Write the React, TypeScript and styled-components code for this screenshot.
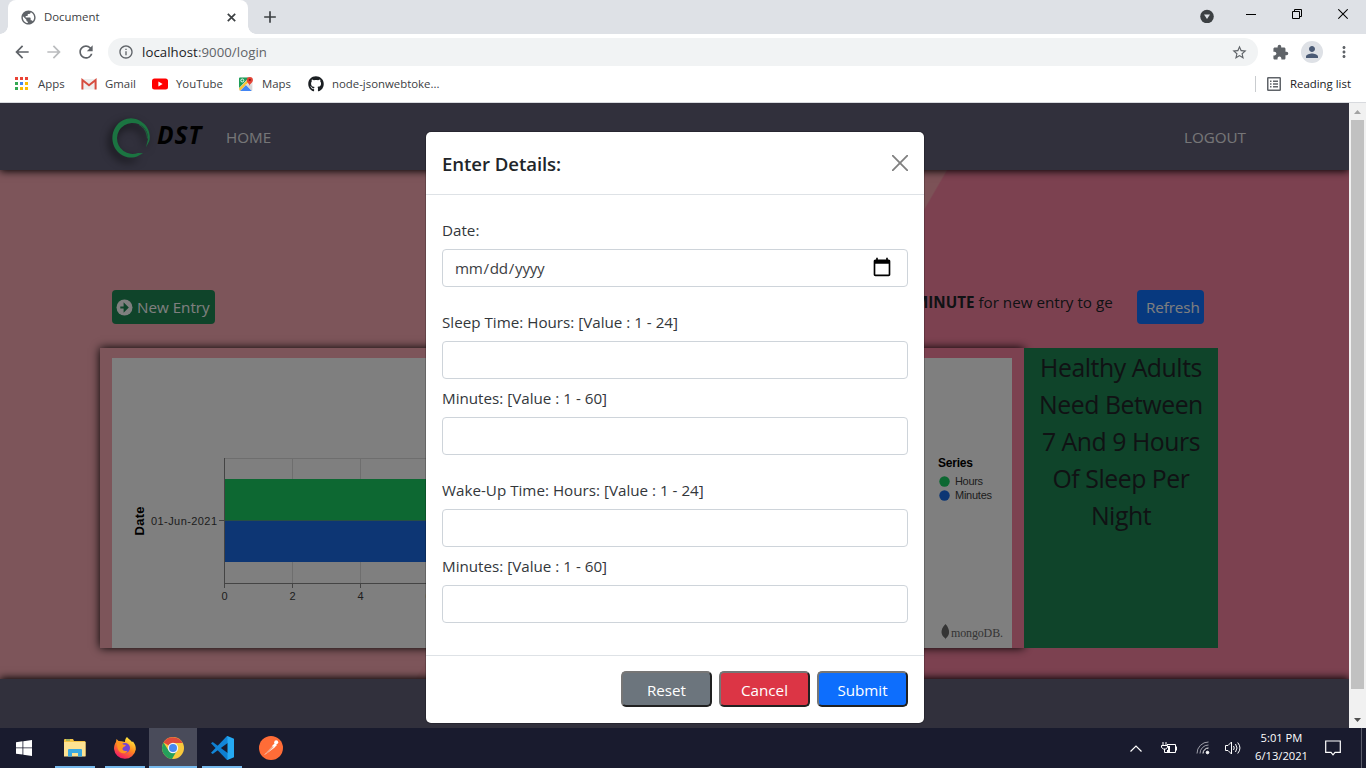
import React from "react";
import styled, { createGlobalStyle } from "styled-components";
import {
  MdArrowBack, MdArrowForward, MdRefresh, MdInfoOutline, MdStarOutline, MdExtension,
  MdPerson, MdMoreVert, MdPublic, MdAdd,
} from "react-icons/md";
import { FaGithub } from "react-icons/fa";

const Global = createGlobalStyle`
  * { box-sizing: border-box; }
  body { margin: 0; overflow: hidden; font-family: "Open Sans", "Noto Sans", sans-serif; }
  button, input { font-family: inherit; }
  svg { display: block; flex: none; }
`;

const Screen = styled.div`
  width: 1366px; height: 768px; display: flex; flex-direction: column; overflow: hidden;
`;
const Label = styled.span<{ $size?: number; $ls?: number; $color?: string; $weight?: number }>`
  font-size: ${p => p.$size ?? 12}px;
  letter-spacing: ${p => p.$ls ?? 0}px;
  color: ${p => p.$color ?? "#3c4043"};
  font-weight: ${p => p.$weight ?? 400};
  white-space: nowrap;
`;

/* ---- browser frame ---- */
const TabStrip = styled.div`
  height: 34px; flex: none; background: #dee1e6; display: flex; padding-left: 8px;
`;
const Tab = styled.div`
  position: relative; width: 240px; height: 34px; background: #fff; border-radius: 8px 8px 0 0;
  display: flex; align-items: center; padding: 0 12px 0 12px; color: #5f6368;
  &::before, &::after {
    content: ""; position: absolute; bottom: 0; width: 8px; height: 8px;
  }
  &::before { left: -8px; background: radial-gradient(circle at 0 0, transparent 7.5px, #fff 8px); }
  &::after { right: -8px; background: radial-gradient(circle at 100% 0, transparent 7.5px, #fff 8px); }
`;
const TabTitle = styled(Label)`flex: 1; margin-left: 7px; padding-bottom: 2px;`;
const NewTab = styled.div`
  width: 20px; margin-left: 12px; display: flex; align-items: center; color: #3c4043;
`;
const WindowControls = styled.div`
  margin-left: auto; display: flex; padding-top: 9px; padding-right: 18px;
`;
const ControlSlot = styled.div<{ $gap: number }>`margin-right: ${p => p.$gap}px;`;
const Toolbar = styled.div`
  height: 36px; flex: none; background: #fff; display: flex; align-items: center;
  padding-left: 12px; color: #5f6368;
`;
const NavIcon = styled.div<{ $dim?: boolean }>`
  width: 32px; color: ${p => (p.$dim ? "#babcbe" : "#5f6368")};
`;
const Omnibox = styled.div`
  width: 1150px; height: 28px; border-radius: 14px; background: #f1f3f4;
  display: flex; align-items: center; padding: 0 10px;
`;
const Url = styled(Label)`flex: 1; margin-left: 8px; color: #5f6368; b { font-weight: 400; color: #202124; }`;
const ToolIcons = styled.div`display: flex; align-items: center; margin-left: 14px;`;
const Avatar = styled.div`
  width: 22px; height: 22px; border-radius: 50%; background: #dee1e6; color: #4a5a75;
  display: flex; align-items: center; justify-content: center; margin: 0 12px;
`;
const Bookmarks = styled.div`
  height: 33px; flex: none; background: #fff; border-bottom: 1px solid #d8dade; display: flex;
  padding: 0 15px 4px 14px; align-items: center;
  ${Label} { padding-bottom: 2px; }
`;
const Bookmark = styled.div<{ $w: number }>`
  width: ${p => p.$w}px; display: flex; align-items: center; gap: 8px;
`;
const ReadingList = styled.div`
  margin-left: auto; height: 16px; border-left: 1px solid #c9cccf; padding-left: 10px;
  display: flex; align-items: center; gap: 8px;
`;

/* ---- web page ---- */
const Viewport = styled.div`height: 625px; flex: none; display: flex;`;
const Page = styled.main`
  position: relative; width: 1349px; height: 625px; display: flex; flex-direction: column; overflow: hidden;
  background:
    linear-gradient(120deg, #faaab4 43.7%, #f8a4ae 43.8%, #f8a4ae 57.6%, #f983a1 57.7%);
`;
const Navbar = styled.nav`
  height: 67px; flex: none; background: #626078; box-shadow: 0 1px 8px #000;
  display: flex; align-items: center; padding: 0 103px 0 110px;
`;
const Brand = styled.div`
  display: flex; align-items: center; color: #000; font: italic 700 24.5px "Open Sans", sans-serif;
`;
const LogoMark = styled.svg`filter: drop-shadow(-3px 4px 4px rgba(0,0,0,.7)); margin-top: 3px;`;
const BrandName = styled.span`width: 69px; margin: -4px 0 0 3px; letter-spacing: .8px;`;
const NavLink = styled(Label)<{ $push?: boolean }>`
  margin-left: ${p => (p.$push ? "auto" : "0")};
`;
const Actions = styled.div`
  height: 34px; margin: 120px 145px 0 112px; display: flex; flex: none;
`;
const PageButton = styled.button<{ $bg: string; $w: number; $indent?: number }>`
  width: ${p => p.$w}px; height: 34px; border: 0; border-radius: 4px; background: ${p => p.$bg};
  display: flex; align-items: center; gap: 4px; padding: 0 0 0 ${p => p.$indent ?? 4}px;
`;
const Ticker = styled.div`
  width: 206px; height: 26px; overflow: hidden; margin: 0 24px 0 auto; padding-left: 7px; font-size: 15.2px;
  line-height: 25px; color: #212529; white-space: nowrap;
  b { font-weight: 700; }
`;
const Dashboard = styled.section`display: flex; margin: 24px 0 0 100px; height: 300px; flex: none;`;
const ChartCard = styled.div`
  width: 924px; padding: 10px 12px 0; box-shadow: 0 0 9px #000;
  background: linear-gradient(120deg, #faaab4 50%, #f983a1 50%);
`;
const ChartPane = styled.div`
  height: 290px; background: #fff;
  svg { font-family: "Liberation Sans", Arial, sans-serif; }
`;
const Fact = styled.div`
  position: relative; width: 194px; background: #1e8854; color: #212529; text-align: center; font-size: 24.8px;
  line-height: 37px; padding: 1px 10px 0; letter-spacing: -0.45px;
`;
const Footer = styled.footer`
  margin-top: auto; height: 49px; background: #626078; box-shadow: 0 -1px 8px #000;
`;
const Backdrop = styled.div`position: absolute; inset: 0; background: rgba(0,0,0,.5);`;

const Scrollbar = styled.div`
  width: 17px; background: #f1f1f1; display: flex; flex-direction: column; align-items: center;
`;
const Thumb = styled.div`width: 13px; height: 569px; background: #c1c1c1;`;
const ScrollArrow = styled.div<{ $down?: boolean }>`
  height: 17px; display: flex; align-items: center; margin-top: ${p => (p.$down ? "auto" : "0")};
`;

/* ---- modal ---- */
const Modal = styled.div`
  position: absolute; left: 426px; top: 29px; width: 498px; height: 591px; background: #fff;
  border-radius: 5px; box-shadow: 0 0 0 1px rgba(0,0,0,.2); display: flex; flex-direction: column;
`;
const ModalHeader = styled.header`
  height: 63px; border-bottom: 1px solid #dee2e6; display: flex; align-items: center;
  justify-content: space-between; padding: 0 16px;
`;
const ModalBody = styled.form`flex: 1; padding: 24px 16px 0;`;
const Field = styled.label<{ $gap: number }>`
  display: flex; flex-direction: column; margin-bottom: ${p => p.$gap}px;
`;
const Caption = styled.span`
  font-size: 15.2px; color: #33373b; line-height: 22px; margin-bottom: 8px;
`;
const Input = styled.input`
  height: 38px; width: 100%; border: 1px solid #ced4da; border-radius: 4px; padding: 6px 12px 6px 11px;
  font-size: 15.2px; letter-spacing: -0.3px; color: #3c4043; background: #fff; outline: 0;
  &::-webkit-calendar-picker-indicator { width: 20px; height: 20px; padding: 0; margin: 0 3px 2px 0; background-size: 20px 20px; }
`;
const ModalFooter = styled.footer`
  height: 68px; border-top: 1px solid #dee2e6; display: flex; justify-content: flex-end; gap: 7px;
  padding: 15px 16px 0 0;
`;
const FormButton = styled.button<{ $bg: string }>`
  width: 91px; height: 36px; border-radius: 5px; border: 2px solid;
  border-color: #767676 #212121 #212121 #767676;
  background: ${p => p.$bg}; color: #fff; font-size: 15.2px; padding: 1px 0 0;
`;

/* ---- taskbar ---- */
const Taskbar = styled.div`
  height: 40px; flex: none; background: #191b2e; display: flex;
`;
const Task = styled.div<{ $w?: number; $active?: boolean; $open?: boolean }>`
  width: ${p => p.$w ?? 49}px; height: 40px; display: flex; align-items: center; justify-content: center;
  background: linear-gradient(${p => (p.$open ? "#76b9ed" : "transparent")}, ${p => (p.$open ? "#76b9ed" : "transparent")})
    center bottom / ${p => (p.$active ? "48px" : "40px")} 2px no-repeat, ${p => (p.$active ? "#494b5a" : "transparent")};
`;
const Tray = styled.div`margin-left: auto; display: flex; align-items: center; padding-right: 4px;`;
const TraySlot = styled.div<{ $w: number }>`
  width: ${p => p.$w}px; display: flex; justify-content: center;
`;
const Clock = styled.div`
  width: 69px; display: flex; flex-direction: column; align-items: center; line-height: 18px; padding-bottom: 2px;
`;
const PeekEdge = styled.div`width: 1px; height: 40px; background: #5b5d6b; margin-left: 11px;`;

const AppsGrid = () => {
  const colors = ["#ea4335", "#ea4335", "#ea4335", "#34a853", "#4285f4", "#fbbc04", "#34a853", "#fbbc04", "#fbbc04"];
  return (
    <svg width="16" height="16" shapeRendering="crispEdges">
      {colors.map((c, i) => (
        <rect key={i} x={1 + (i % 3) * 5} y={1 + Math.floor(i / 3) * 5} width="3" height="3" fill={c} />
      ))}
    </svg>
  );
};
const GmailIcon = () => (
  <svg width="16" height="16" viewBox="0 0 16 16">
    <rect x="1" y="3" width="14" height="10.5" fill="#eee" />
    <path d="M1.4 13.5V4l6.6 5.2L14.6 4v9.5" fill="none" stroke="#d64c3f" strokeWidth="2" />
  </svg>
);
const YouTubeIcon = () => (
  <svg width="16" height="16" viewBox="0 0 16 16">
    <rect y="2.5" width="16" height="11" rx="2.5" fill="#f00" />
    <path d="M6.4 5.6v4.8L10.6 8z" fill="#fff" />
  </svg>
);
const MapsIcon = () => (
  <svg width="16" height="16" viewBox="0 0 16 16">
    <rect x="1" y="1.5" width="13.5" height="13.5" rx="1.5" fill="#e4e4e4" />
    <path d="M1 2.5a1 1 0 0 1 1-1h9L1 12z" fill="#1e9e5a" />
    <path d="M2 15l6-6 6 6z" fill="#4285f4" />
    <path d="M1 12.5L12 1.5l1.5 1.5L2 14.7z" fill="#fbc32d" />
    <path d="M7 8l7 7V9.5z" fill="#d7d7d7" />
    <path d="M11.6 10c-.3-2.6-2.9-3.3-2.9-6A3 3 0 0 1 14.900 4c0 2.700-2.900 3.400-3.300 6z" fill="#e54335" />
    <circle cx="11.8" cy="3.9" r="1.1" fill="#8c1f18" />
    <circle cx="4.3" cy="4.5" r="1.5" fill="none" stroke="#fff" strokeWidth=".9" />
  </svg>
);
const ReadingIcon = () => (
  <svg width="16" height="16" viewBox="0 0 16 16" fill="none" stroke="#5f6368" strokeWidth="1.5">
    <rect x="1.75" y="1.75" width="12.5" height="12.5" rx=".6" />
    <path d="M4 5.200h1.500M7 5.200h5M4 8h1.500M7 8h5M4 10.800h1.500M7 10.800h5" />
  </svg>
);
const Arrow = ({ down, color }: { down?: boolean; color: string }) => (
  <svg width="7" height="4" viewBox="0 0 7 4"><path d={down ? "M0 0h7L3.500 4z" : "M0 4h7L3.500 0z"} fill={color} /></svg>
);
const BrushRing = () => (
  <LogoMark width="44" height="44" viewBox="0 0 44 44">
    <path d="M33 7A18.600 19.600 0 1 0 27 40.500l6-3.200-5-.4A15.500 15.500 0 1 1 29 8.300c6 2.500 9 8 9.200 14l-2.200 9 3.200-6c1.600-7-.6-14-6.200-18.300z" fill="#36e882" />
    <path d="M31 7.500c6 4 9 10.500 7.500 18M29 8.500c5 3 8 7 8.500 14" fill="none" stroke="#36e882" strokeWidth=".8" />
  </LogoMark>
);

const Chart = () => (
  <svg width="900" height="290">
    <g stroke="#ddd">
      <path d="M112.500 100.500H800M180.500 100.500V225M248.500 100.500V225M316.500 100.500V225" fill="none" />
    </g>
    <rect x="112" y="121" width="400" height="41" fill="#1ad064" />
    <rect x="112" y="163" width="400" height="41" fill="#1a6de8" />
    <rect x="112" y="162" width="400" height="1" fill="#4f9c8c" />
    <path d="M112.500 100V225.500H800M107 162.500h5M112.500 225v5M180.500 225v5M248.500 225v5M316.500 225v5" fill="none" stroke="#888" />
    <g fontSize="11" fill="#3c3c3c">
      <text x="39" y="167" textLength="66">01-Jun-2021</text>
      <text x="112.500" y="242" textAnchor="middle">0</text>
      <text x="180.500" y="242" textAnchor="middle">2</text>
      <text x="248.500" y="242" textAnchor="middle">4</text>
      <text x="316.500" y="242" textAnchor="middle">6</text>
      <text x="843" y="127" textLength="28">Hours</text>
      <text x="843" y="141" textLength="37">Minutes</text>
    </g>
    <text transform="translate(32 177.500) rotate(-90)" fontSize="13" fontWeight="700" textLength="29">Date</text>
    <text x="826" y="109" fontSize="12" fontWeight="700" textLength="35">Series</text>
    <circle cx="832.500" cy="123.500" r="5.200" fill="#1ad064" />
    <circle cx="832.500" cy="137.500" r="5.200" fill="#1a6de8" />
    <path d="M833.500 266c-6 6-4.500 11.500-.3 14.200l.3 1.300.4-1.300c4.200-3 4.600-8.500-.4-14.200z" fill="#6a6a6a" />
    <text x="839" y="279" fontSize="12" fill="#6a6a6a" textLength="52" style={{ fontFamily: "Liberation Serif" }}>mongoDB.</text>
  </svg>
);

const WindowsIcon = () => (
  <svg width="16" height="16" viewBox="0 0 16 16" fill="#fff">
    <path d="M0 2.200l6.500-.9v6.200H0zM7.300 1.200L16 0v7.500H7.300zM0 8.300h6.500v6.300L0 13.700zM7.300 8.300H16V16l-8.700-1.200z" />
  </svg>
);
const ExplorerIcon = () => (
  <svg width="22" height="20" viewBox="0 0 22 20">
    <path d="M0 2a1 1 0 0 1 1-1h8l1 2h10.500a1 1 0 0 1 1 1v14H0z" fill="#f5c445" />
    <path d="M0 4h21.500v14.500H0z" fill="#fde292" />
    <path d="M4 18.500V12a1 1 0 0 1 1-1h12a1 1 0 0 1 1 1v6.500h-4V15H8v3.500z" fill="#3ba9e0" />
    <path d="M2 2h4" stroke="#4d9e72" />
  </svg>
);
const FirefoxIcon = () => (
  <svg width="24" height="24" viewBox="0 0 24 24">
    <defs>
      <linearGradient id="fx" x1=".8" y1=".1" x2=".3" y2="1">
        <stop offset="0" stopColor="#ffe83e" /><stop offset=".45" stopColor="#ff8a1e" /><stop offset="1" stopColor="#f2136a" />
      </linearGradient>
    </defs>
    <path d="M14 1c1 2 4 3 5 5l1-.5c2 2.500 3 5 2.800 8A11 11 0 0 1 1 13c0-3 .6-5 2-7l.5-3 2 2 3 .2L12 6c0-2 .5-4 2-5z" fill="url(#fx)" />
    <circle cx="12" cy="12" r="5" fill="#7542d5" />
    <path d="M4 7c3-1.500 5 0 6 1.500l3 .5c-1 2-3 1.800-3.500 3.500s2 3.300 5 2.200c-2 4-8 3-9.500-1.200C4.300 11 4 9 4 7z" fill="#ff9420" />
  </svg>
);
const ChromeIcon = () => (
  <svg width="24" height="24" viewBox="0 0 24 24">
    <circle cx="12" cy="12" r="11" fill="#f9c93c" />
    <path d="M12 12L2.500 6.500A11 11 0 0 1 21.600 7H12z" fill="#de4a3b" />
    <path d="M2.500 6.500A11 11 0 0 0 11 23l5-8.500L12 12 7.500 14.500z" fill="#25a05b" />
    <circle cx="12" cy="12" r="5.200" fill="#f4f4f4" /><circle cx="12" cy="12" r="4" fill="#4688f1" />
  </svg>
);
const CodeIcon = () => (
  <svg width="24" height="24" viewBox="0 0 24 24">
    <path d="M1 7.300l1.700-1.200L18 17.300V24h-1z" fill="#0e7fd0" />
    <path d="M1 16.700l1.700 1.200L18 6.700V0h-1z" fill="#1386d8" />
    <path d="M17.500 0L24 2.800v18.400L17.500 24z" fill="#25a9f2" />
  </svg>
);
const PostmanIcon = () => (
  <svg width="24" height="24" viewBox="0 0 24 24">
    <circle cx="12" cy="12" r="12" fill="#ff6c37" />
    <path d="M5 19l8.500-9 2 1.800L7 18z" fill="#ffe3d6" />
    <path d="M13 10l3-3 2 2-3 3z" fill="#fff" /><circle cx="17.200" cy="6.200" r="2" fill="#fff" />
    <path d="M7 17.500l7-7" stroke="#e05c2b" strokeWidth=".8" />
  </svg>
);

export default function App() {
  return (
    <Screen>
      <Global />
      <TabStrip>
        <Tab>
          <MdPublic size={17} />
          <TabTitle $size={11.4}>Document</TabTitle>
          <svg width="9" height="9"><path d="M.8.8l7.400 7.400M8.200.8L.8 8.200" stroke="#3c4043" strokeWidth="1.700" /></svg>
        </Tab>
        <NewTab><MdAdd size={20} /></NewTab>
        <WindowControls>
          <ControlSlot $gap={32}>
            <svg width="14" height="14"><circle cx="7" cy="7.5" r="6.8" fill="#3c4043" /><path d="M4 5.500h6L7 10z" fill="#dee1e6" /></svg>
          </ControlSlot>
          <ControlSlot $gap={36}><svg width="10" height="12"><path d="M0 5.500h10" stroke="#000" /></svg></ControlSlot>
          <ControlSlot $gap={36}>
            <svg width="10" height="11" fill="none" stroke="#000"><path d="M.5 2.500h7v7h-7zM2.500 2.500v-2h7v7h-2" /></svg>
          </ControlSlot>
          <svg width="10" height="11"><path d="M.3.300l9.400 9.400M9.700.300L.3 9.700" stroke="#000" strokeWidth="1.100" /></svg>
        </WindowControls>
      </TabStrip>
      <Toolbar>
        <NavIcon><MdArrowBack size={20} /></NavIcon>
        <NavIcon $dim><MdArrowForward size={20} /></NavIcon>
        <NavIcon><MdRefresh size={20} /></NavIcon>
        <Omnibox>
          <MdInfoOutline size={16} />
          <Url $size={13.2} $ls={0.07}><b>localhost</b>:9000/login</Url>
          <MdStarOutline size={17} />
        </Omnibox>
        <ToolIcons>
          <MdExtension size={17} />
          <Avatar><MdPerson size={18} /></Avatar>
          <MdMoreVert size={18} />
        </ToolIcons>
      </Toolbar>
      <Bookmarks>
        <Bookmark $w={67}><AppsGrid /><Label $size={11.4}>Apps</Label></Bookmark>
        <Bookmark $w={71}><GmailIcon /><Label $size={11.4}>Gmail</Label></Bookmark>
        <Bookmark $w={86}><YouTubeIcon /><Label $size={11.4}>YouTube</Label></Bookmark>
        <Bookmark $w={70}><MapsIcon /><Label $size={11.4}>Maps</Label></Bookmark>
        <Bookmark $w={134}><FaGithub size={16} color="#1b1f23" /><Label $size={11.4}>node-jsonwebtoke...</Label></Bookmark>
        <ReadingList><ReadingIcon /><Label $size={11.4} $color="#202124">Reading list</Label></ReadingList>
      </Bookmarks>

      <Viewport>
        <Page>
          <Navbar>
            <Brand><BrushRing /><BrandName>DST</BrandName></Brand>
            <NavLink $size={15.2} $color="#ededf0">HOME</NavLink>
            <NavLink $size={15.2} $color="#ededf0" $push>LOGOUT</NavLink>
          </Navbar>
          <Actions>
            <PageButton $bg="#1e8854" $w={103}>
              <svg width="17" height="17" viewBox="0 0 17 17">
                <circle cx="8.5" cy="8.5" r="8" fill="#fff" />
                <path d="M4.300 8.500h5M8.600 5.700l2.800 2.800-2.800 2.800z" stroke="#1e8854" strokeWidth="2" fill="#1e8854" />
              </svg>
              <Label $size={15.2} $color="#fff">New Entry</Label>
            </PageButton>
            <Ticker><b>MINUTE</b> for new entry to ge</Ticker>
            <PageButton $bg="#0e72fe" $w={67} $indent={9}><Label $size={15.2} $ls={-0.1} $color="#fff">Refresh</Label></PageButton>
          </Actions>
          <Dashboard>
            <ChartCard><ChartPane><Chart /></ChartPane></ChartCard>
            <Fact>Healthy Adults Need Between 7 And 9 Hours Of Sleep Per Night</Fact>
          </Dashboard>
          <Footer />
          <Backdrop />
          <Modal>
            <ModalHeader>
              <Label $size={18.6} $weight={600} $ls={-0.07} $color="#212529">Enter Details:</Label>
              <svg width="16" height="16"><path d="M.7.700l14.600 14.600M15.300.700L.7 15.300" stroke="#808080" strokeWidth="1.800" strokeLinecap="round" /></svg>
            </ModalHeader>
            <ModalBody>
              <Field $gap={24}><Caption>Date:</Caption><Input type="date" /></Field>
              <Field $gap={8}><Caption>Sleep Time: Hours: [Value : 1 - 24]</Caption><Input /></Field>
              <Field $gap={24}><Caption>Minutes: [Value : 1 - 60]</Caption><Input /></Field>
              <Field $gap={8}><Caption>Wake-Up Time: Hours: [Value : 1 - 24]</Caption><Input /></Field>
              <Field $gap={0}><Caption>Minutes: [Value : 1 - 60]</Caption><Input /></Field>
            </ModalBody>
            <ModalFooter>
              <FormButton $bg="#6c757d">Reset</FormButton>
              <FormButton $bg="#dc3545">Cancel</FormButton>
              <FormButton $bg="#0d6efd">Submit</FormButton>
            </ModalFooter>
          </Modal>
        </Page>
        <Scrollbar>
          <ScrollArrow><Arrow color="#a3a3a3" /></ScrollArrow>
          <Thumb />
          <ScrollArrow $down><Arrow down color="#505050" /></ScrollArrow>
        </Scrollbar>
      </Viewport>

      <Taskbar>
        <Task $w={48}><WindowsIcon /></Task>
        <Task $w={53} $open><ExplorerIcon /></Task>
        <Task $w={48} $open><FirefoxIcon /></Task>
        <Task $w={48} $active $open><ChromeIcon /></Task>
        <Task $w={49} $open><CodeIcon /></Task>
        <Task $w={49}><PostmanIcon /></Task>
        <Tray>
          <TraySlot $w={32}><svg width="12" height="7"><path d="M.5 6.500L6 1l5.500 5.500" fill="none" stroke="#fff" strokeWidth="1.200" /></svg></TraySlot>
          <TraySlot $w={34}>
            <svg width="17" height="12" fill="none" stroke="#fff"><path d="M6 2.500h8.500v8H5M15.500 4.500v4M2 0v3M5 0v3M.5 3.500h6v2l-2 1.500h-2l-2-1.500zM3.500 7v3.500H6" /><path d="M8 4v5H6" strokeWidth="2" /></svg>
          </TraySlot>
          <TraySlot $w={34}>
            <svg width="14" height="14" fill="none" stroke="#fff"><g stroke="#a0a1ab"><path d="M1 12.500A11.500 11.500 0 0 1 12.500 1M4 12.500A8.500 8.500 0 0 1 12.500 4" /></g><path d="M7 12.500A5.500 5.500 0 0 1 12.500 7" /><circle cx="11.5" cy="11.5" r="1.3" fill="#fff" /></svg>
          </TraySlot>
          <TraySlot $w={27}>
            <svg width="17" height="14" fill="none" stroke="#fff"><path d="M.5 4.500h2.500L6.500 1v12L3 9.500H.5zM8.500 5q1.500 2 0 4M10.500 3q3 4 0 8M12.700 1.500q4.500 5.500 0 11" /></svg>
          </TraySlot>
          <Clock><Label $color="#fff" $size={11.2}>5:01 PM</Label><Label $color="#fff" $size={11.2}>6/13/2021</Label></Clock>
          <TraySlot $w={34}>
            <svg width="16" height="16" fill="none" stroke="#fff" strokeWidth="1.2"><path d="M.7 1h14.600v11.300H10L8 14.800l-2-2.500H.7z" /></svg>
          </TraySlot>
          <PeekEdge />
        </Tray>
      </Taskbar>
    </Screen>
  );
}
